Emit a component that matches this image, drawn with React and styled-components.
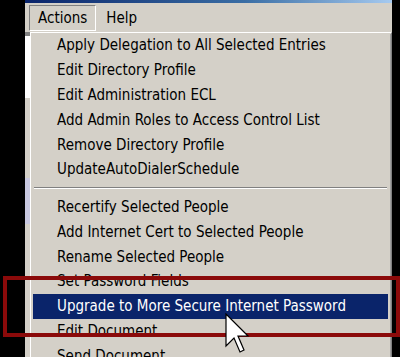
import styled, { createGlobalStyle } from "styled-components";

const GlobalStyle = createGlobalStyle`
  html, body {
    margin: 0;
    padding: 0;
    background: #000;
    overflow: hidden;
  }
`;

const Screen = styled.div`
  position: relative;
  width: 400px;
  height: 357px;
  overflow: hidden;
  background: #000;
  display: flex;
  font-family: "DejaVu Sans Condensed", "DejaVu Sans", sans-serif;
  font-size: 15px;
  letter-spacing: 0;
  color: #000;
`;

const BlackEdge = styled.div`
  width: ${(p) => p.$w}px;
  flex-shrink: 0;
  background: #000;
`;

const Window = styled.div`
  width: 367px;
  flex-shrink: 0;
  display: flex;
  flex-direction: column;
  background: #d4d0c8;
`;

const TitleStrip = styled.div`
  height: 3px;
  flex-shrink: 0;
  background: linear-gradient(90deg, #0a246a, #3a6ea5 60%, #a6caf0);
`;

const MenuBar = styled.div`
  height: 29px;
  flex-shrink: 0;
  display: flex;
  align-items: center;
  padding-left: 4px;
  gap: 1px;
  background: #d4d0c8;
`;

const BarItem = styled.div`
  height: 26px;
  display: flex;
  align-items: center;
  padding: 0 8px;
  box-sizing: border-box;
  border: 1px solid;
  border-color: ${(p) =>
    p.$open ? "#808080 #fff #fff #808080" : "transparent"};
`;

const Body = styled.div`
  flex: 1;
  min-height: 0;
  display: flex;
`;

const BackSliver = styled.div`
  width: 5px;
  flex-shrink: 0;
  display: flex;
  flex-direction: column;
  background: #d4d0c8;
`;

const SliverPart = styled.div`
  height: ${(p) => p.$h}px;
  flex-shrink: 0;
  background: ${(p) => p.$c};
`;

const Menu = styled.div`
  flex: 1;
  border-top: 1px solid #fff;
  border-left: 1px solid #fff;
  border-right: 1px solid #808080;
  box-shadow: inset 1px 1px 0 #d4d0c8, inset -1px 0 0 #a0a0a0;
  padding: 0 3px 0 2px;
  background: #d4d0c8;
`;

const Item = styled.div`
  height: 24.8px;
  display: flex;
  align-items: center;
  padding-left: 24px;
  white-space: nowrap;
  background: ${(p) => (p.$active ? "#0a246a" : "transparent")};
  color: ${(p) => (p.$active ? "#fff" : "#000")};
`;

const Separator = styled.div`
  height: 12.8px;
  display: flex;
  align-items: center;
  padding: 0 1px;

  &::before {
    content: "";
    flex: 1;
    height: 0;
    border-top: 1px solid #808080;
    border-bottom: 1px solid #fff;
  }
`;

const RedBox = styled.div`
  position: absolute;
  left: 3px;
  top: 276px;
  width: 389px;
  height: 53px;
  border: 4px solid #8b0a0a;
  pointer-events: none;
`;

const Cursor = styled.svg`
  position: absolute;
  left: 225px;
  top: 313px;
`;

const topItems = [
  "Apply Delegation to All Selected Entries",
  "Edit Directory Profile",
  "Edit Administration ECL",
  "Add Admin Roles to Access Control List",
  "Remove Directory Profile",
  "UpdateAutoDialerSchedule",
];

const bottomItems = [
  "Recertify Selected People",
  "Add Internet Cert to Selected People",
  "Rename Selected People",
  "Set Password Fields",
  "Upgrade to More Secure Internet Password",
  "Edit Document",
  "Send Document",
];

export default function App() {
  return (
    <>
      <GlobalStyle />
      <Screen>
        <BlackEdge $w={25} />
        <Window>
          <TitleStrip />
          <MenuBar>
            <BarItem $open>Actions</BarItem>
            <BarItem>Help</BarItem>
          </MenuBar>
          <Body>
            <BackSliver>
              <SliverPart $h={4} $c="#808080" />
              <SliverPart $h={62} $c="#fff" />
              <SliverPart $h={80} $c="#d4d0c8" />
              <SliverPart $h={46} $c="#c8c8e0" />
              <SliverPart $h={140} $c="#d4d0c8" />
            </BackSliver>
            <Menu>
              {topItems.map((t) => (
                <Item key={t}>{t}</Item>
              ))}
              <Separator />
              {bottomItems.map((t) => (
                <Item key={t} $active={t.startsWith("Upgrade")}>
                  {t}
                </Item>
              ))}
            </Menu>
          </Body>
        </Window>
        <BlackEdge $w={8} />
        <RedBox />
        <Cursor width="26" height="44" viewBox="0 0 13 22">
          <path
            d="M0.5 0.5 L0.5 16.5 L4.5 12.5 L7.5 19.5 L9.5 18.5 L6.5 11.5 L11.5 11.5 Z"
            fill="#fff"
            stroke="#000"
            strokeWidth="0.6"
            strokeLinejoin="miter"
          />
        </Cursor>
      </Screen>
    </>
  );
}
